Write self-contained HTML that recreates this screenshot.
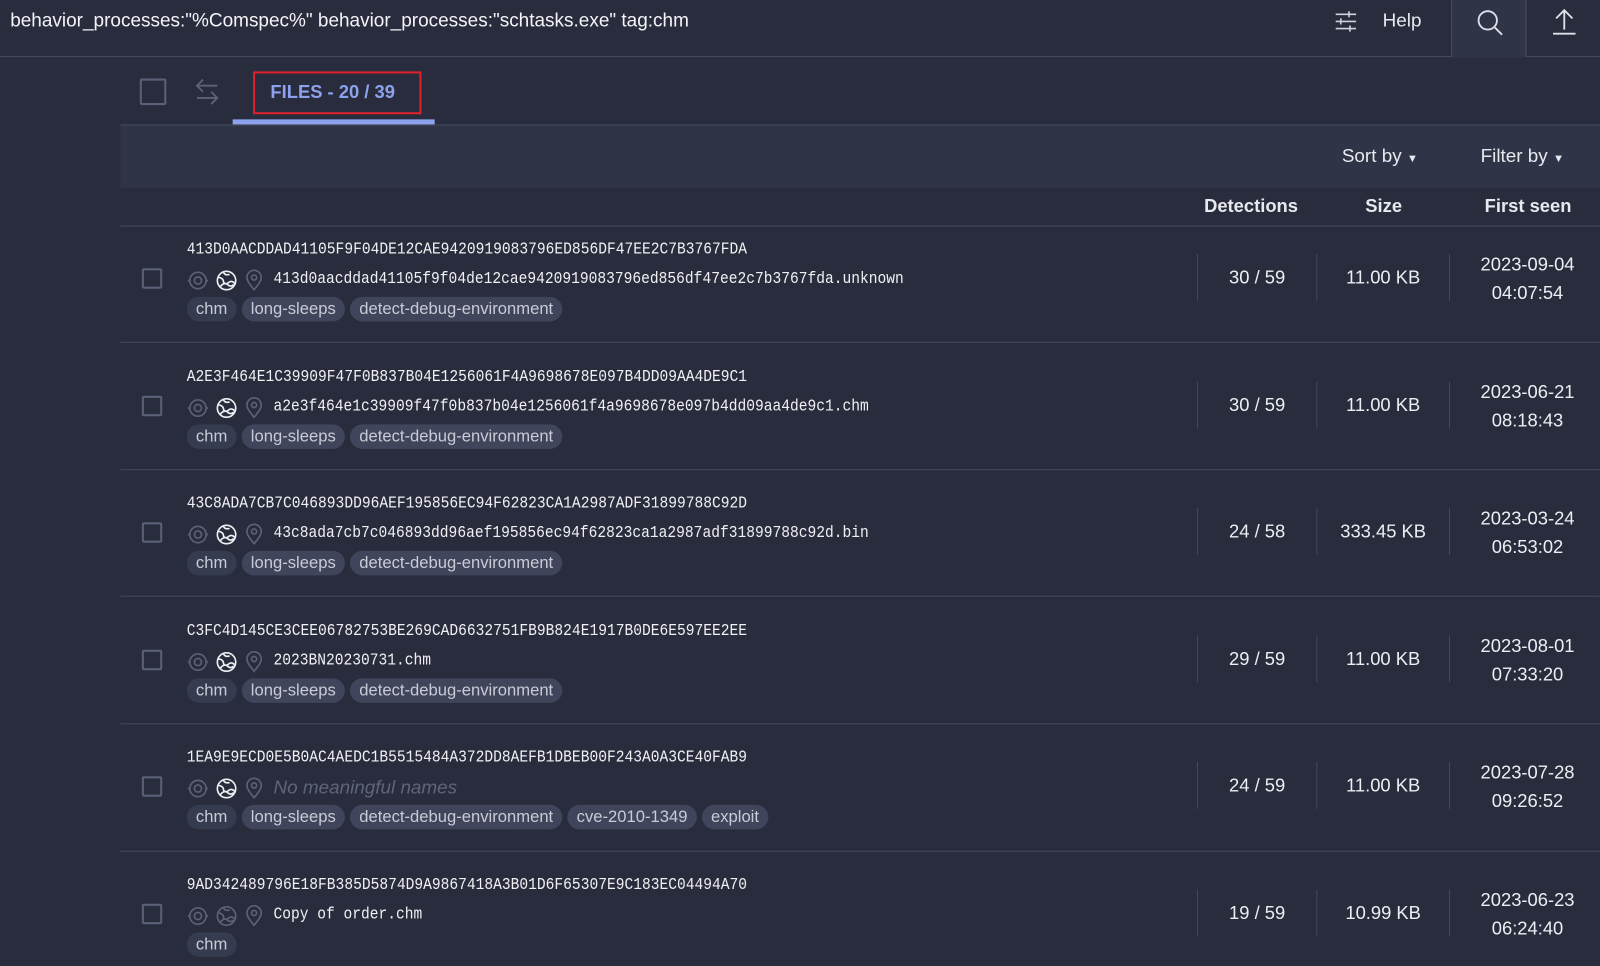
<!DOCTYPE html>
<html><head><meta charset="utf-8"><style>
*{margin:0;padding:0;box-sizing:border-box}
html,body{width:1600px;height:966px;overflow:hidden;background:#292c3c}
#w{position:absolute;left:0;top:0;width:1568px;height:947px;transform:scale(1.0204,1.0201);transform-origin:0 0;font-family:"Liberation Sans",sans-serif;color:#e8e9ef}
.a{position:absolute}
.mono{font-family:"Liberation Mono",monospace;font-size:14.3px;color:#f0f0f4;transform:scaleY(1.12);transform-origin:0 50%;white-space:nowrap}
.cb{width:20px;height:20px;border:2px solid #5a6078;border-radius:2px}
.tags{position:absolute;left:183px;display:flex;gap:5px}
.tag{height:24px;line-height:24px;border-radius:12px;background:#40455c;color:#c9cbd6;font-size:16.3px;padding:0 9px;white-space:nowrap}
.tag.c{background:#353c50}
.num{font-size:18px;text-align:center;color:#eceef3}
.vl{position:absolute;width:1px;background:#43485c;height:46px}
.hl{position:absolute;left:118px;right:0;height:1px;background:#454a5e}
</style></head><body><div id="w">
<div class="a" style="left:0;top:0;width:1568px;height:56px;background:#292c3c;border-bottom:1px solid #474c60"></div>
<div class="a" style="left:10px;top:9px;font-size:18.6px;color:#f4f4f8">behavior_processes:"%Comspec%" behavior_processes:"schtasks.exe" tag:chm</div>
<svg class="a" style="left:1306px;top:9px" width="26" height="24" viewBox="0 0 26 24" stroke="#cfd2dc" stroke-width="1.6" fill="none"><path d="M3 5h20M3 12h20M3 19h20M16 2v6M8 9v6M17 16v6"/></svg>
<div class="a" style="left:1355px;top:9px;font-size:18.5px">Help</div>
<div class="a" style="left:1422px;top:0;width:74px;height:56px;background:#303447;border-left:1px solid #474c60;border-right:1px solid #474c60"></div>
<svg class="a" style="left:1446px;top:8px" width="28" height="28" viewBox="0 0 28 28" stroke="#dfe1e8" stroke-width="1.8" fill="none"><circle cx="12" cy="12" r="9"/><path d="M19 19l7 7"/></svg>
<svg class="a" style="left:1520px;top:7px" width="26" height="28" viewBox="0 0 26 28" stroke="#dfe1e8" stroke-width="1.8" fill="none"><path d="M13 22V3M5 11l8-8 8 8M2 26h22"/></svg>

<div class="a cb" style="left:137px;top:77px;width:26px;height:26px"></div>
<svg class="a" style="left:189px;top:75px" width="28" height="30" viewBox="0 0 28 30" stroke="#5c6176" stroke-width="1.8" fill="none"><path d="M24 9H4M10 3L4 9l6 6M4 21h20M18 15l6 6-6 6"/></svg>
<div class="a" style="left:248px;top:70px;width:165px;height:42px;border:2px solid #e0202a"></div>
<div class="a" style="left:265px;top:80px;font-size:18px;font-weight:bold;color:#8da2ee">FILES - 20 / 39</div>
<div class="a" style="left:228px;top:117px;width:198px;height:5px;background:#8da2ee"></div>
<div class="a" style="left:118px;top:122px;width:1450px;height:62px;background:#303447;border-top:1px solid #474c60"></div>
<div class="a" style="left:1315px;top:142px;font-size:18.5px">Sort by <span style="font-size:11px">▼</span></div>
<div class="a" style="left:1451px;top:142px;font-size:18.5px">Filter by <span style="font-size:11px">▼</span></div>
<div class="a" style="left:1180px;top:192px;font-size:18px;font-weight:bold">Detections</div>
<div class="a" style="left:1338px;top:192px;font-size:18px;font-weight:bold">Size</div>
<div class="a" style="left:1455px;top:192px;font-size:18px;font-weight:bold">First seen</div>
<div class="hl" style="top:221px"></div>
<div class="hl" style="top:335px"></div>
<div class="hl" style="top:460px"></div>
<div class="hl" style="top:584px"></div>
<div class="hl" style="top:709px"></div>
<div class="hl" style="top:834px"></div>

<div id="rows"></div>
<script>
var R=[
["413D0AACDDAD41105F9F04DE12CAE9420919083796ED856DF47EE2C7B3767FDA","413d0aacddad41105f9f04de12cae9420919083796ed856df47ee2c7b3767fda.unknown",3,"30 / 59","11.00 KB","2023-09-04","04:07:54"],
["A2E3F464E1C39909F47F0B837B04E1256061F4A9698678E097B4DD09AA4DE9C1","a2e3f464e1c39909f47f0b837b04e1256061f4a9698678e097b4dd09aa4de9c1.chm",3,"30 / 59","11.00 KB","2023-06-21","08:18:43"],
["43C8ADA7CB7C046893DD96AEF195856EC94F62823CA1A2987ADF31899788C92D","43c8ada7cb7c046893dd96aef195856ec94f62823ca1a2987adf31899788c92d.bin",3,"24 / 58","333.45 KB","2023-03-24","06:53:02"],
["C3FC4D145CE3CEE06782753BE269CAD6632751FB9B824E1917B0DE6E597EE2EE","2023BN20230731.chm",3,"29 / 59","11.00 KB","2023-08-01","07:33:20"],
["1EA9E9ECD0E5B0AC4AEDC1B5515484A372DD8AEFB1DBEB00F243A0A3CE40FAB9","",5,"24 / 59","11.00 KB","2023-07-28","09:26:52"],
["9AD342489796E18FB385D5874D9A9867418A3B01D6F65307E9C183EC04494A70","Copy of order.chm",1,"19 / 59","10.99 KB","2023-06-23","06:24:40"]];
var tags=[["chm","c"],["long-sleeps",""],["detect-debug-environment",""],["cve-2010-1349",""],["exploit",""]];
var h="";
R.forEach(function(r,i){var y=Math.round(244+124.6*i);
h+='<div class="a mono" style="left:183px;top:'+(y-7)+'px">'+r[0]+'</div>';
h+='<div class="a cb" style="left:139px;top:'+(y+19)+'px"></div>';
var g=i==5?'#5c6176':'#eef0f4';
h+='<svg class="a" style="left:183px;top:'+(y+20)+'px" width="80" height="22" viewBox="0 0 80 22" fill="none" stroke-width="1.6"><g stroke="#5c6176"><circle cx="11" cy="11" r="8"/><circle cx="11" cy="11" r="3.5"/><path d="M1 11h2M19 11h2"/><path d="M66 20c-5-6-7-9-7-12a7 7 0 0 1 14 0c0 3-2 6-7 12z"/><circle cx="66" cy="8" r="2.5"/></g><g stroke="'+g+'"><circle cx="39" cy="11" r="9"/><path d="M31 8c3 0 5 2 5 4s3 3 5 1 5-1 6 1M33 17c2-3 5-4 7-2s4 2 6 0M36 3c1 2 3 3 6 2"/></g></svg>';
if(r[1])h+='<div class="a mono" style="left:268px;top:'+(y+22)+'px">'+r[1]+'</div>';
else h+='<div class="a" style="left:268px;top:'+(y+19)+'px;font-size:18.5px;font-style:italic;color:#5f6478">No meaningful names</div>';
h+='<div class="tags" style="top:'+(y+47)+'px">';
for(var t=0;t<r[2];t++)h+='<div class="tag '+tags[t][1]+'">'+tags[t][0]+'</div>';
h+='</div>';
h+='<div class="vl" style="left:1173px;top:'+(y+5)+'px"></div><div class="vl" style="left:1290px;top:'+(y+5)+'px"></div><div class="vl" style="left:1420px;top:'+(y+5)+'px"></div>';
h+='<div class="a num" style="left:1174px;width:116px;top:'+(y+18)+'px">'+r[3]+'</div>';
h+='<div class="a num" style="left:1291px;width:129px;top:'+(y+18)+'px">'+r[4]+'</div>';
h+='<div class="a num" style="left:1421px;width:152px;top:'+(y+1)+'px;line-height:28px">'+r[5]+'<br>'+r[6]+'</div>';
});
document.getElementById("rows").innerHTML=h;
</script>
</div></body></html>
